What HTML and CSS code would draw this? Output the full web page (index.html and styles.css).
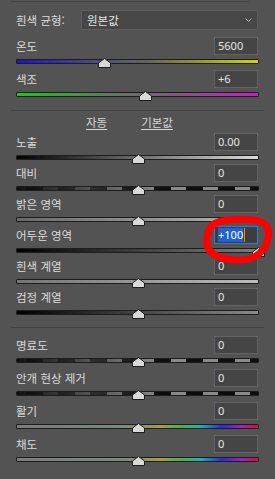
FILE: index.html
```html
<!DOCTYPE html>
<html lang="ko">
<head>
    <meta charset="UTF-8">
    <meta name="viewport" content="width=device-width, initial-scale=1.0">
    <title>기본 보정</title>
    <link rel="stylesheet" href="styles.css">
</head>
<body>
    <div class="panel">
        <div class="top-edge"></div>

        <div class="wb-row">
            <span class="label">흰색 균형:</span>
            <div class="select">
                <span>원본값</span>
                <svg class="chevron" width="7" height="4" viewBox="0 0 7 4"><path d="M0.5 0.5 L3.5 3.5 L6.5 0.5" fill="none" stroke="#bcbcbc" stroke-width="1"/></svg>
            </div>
        </div>

        <!-- white balance -->
        <div class="group">
            <div class="ctrl">
                <div class="ctrl-head"><span class="label">온도</span><span class="num">5600</span></div>
                <div class="track temp"><svg class="thumb" style="left: 36%" width="13" height="10" viewBox="0 0 13 10"><path d="M6.5 0.5 L12.5 5 L12.5 9.5 L0.5 9.5 L0.5 5 Z" fill="#d9d9d9" stroke="#1c1c1c"/></svg></div>
            </div>
            <div class="ctrl">
                <div class="ctrl-head"><span class="label">색조</span><span class="num">+6</span></div>
                <div class="track tint"><svg class="thumb" style="left: 53%" width="13" height="10" viewBox="0 0 13 10"><path d="M6.5 0.5 L12.5 5 L12.5 9.5 L0.5 9.5 L0.5 5 Z" fill="#d9d9d9" stroke="#1c1c1c"/></svg></div>
            </div>
        </div>

        <div class="sep"></div>

        <div class="auto-row">
            <span class="link">자동</span>
            <span class="link">기본값</span>
        </div>

        <!-- tone -->
        <div class="group tight">
            <div class="ctrl">
                <div class="ctrl-head"><span class="label">노출</span><span class="num">0.00</span></div>
                <div class="track expo"><svg class="thumb" style="left: 50%" width="13" height="10" viewBox="0 0 13 10"><path d="M6.5 0.5 L12.5 5 L12.5 9.5 L0.5 9.5 L0.5 5 Z" fill="#d9d9d9" stroke="#1c1c1c"/></svg></div>
            </div>
            <div class="ctrl">
                <div class="ctrl-head"><span class="label">대비</span><span class="num">0</span></div>
                <div class="track pattern"><svg class="thumb" style="left: 50%" width="13" height="10" viewBox="0 0 13 10"><path d="M6.5 0.5 L12.5 5 L12.5 9.5 L0.5 9.5 L0.5 5 Z" fill="#d9d9d9" stroke="#1c1c1c"/></svg></div>
            </div>
            <div class="ctrl">
                <div class="ctrl-head"><span class="label">밝은 영역</span><span class="num">0</span></div>
                <div class="track highs"><svg class="thumb" style="left: 50%" width="13" height="10" viewBox="0 0 13 10"><path d="M6.5 0.5 L12.5 5 L12.5 9.5 L0.5 9.5 L0.5 5 Z" fill="#d9d9d9" stroke="#1c1c1c"/></svg></div>
            </div>
            <div class="ctrl">
                <div class="ctrl-head"><span class="label">어두운 영역</span><span class="num focus"><span class="sel">+100</span><span class="caret"></span></span></div>
                <div class="track shadows"><svg class="thumb" style="left: 100%" width="13" height="10" viewBox="0 0 13 10"><path d="M6.5 0.5 L12.5 5 L12.5 9.5 L0.5 9.5 L0.5 5 Z" fill="#d9d9d9" stroke="#1c1c1c"/></svg></div>
            </div>
            <div class="ctrl">
                <div class="ctrl-head"><span class="label">흰색 계열</span><span class="num">0</span></div>
                <div class="track whites"><svg class="thumb" style="left: 50%" width="13" height="10" viewBox="0 0 13 10"><path d="M6.5 0.5 L12.5 5 L12.5 9.5 L0.5 9.5 L0.5 5 Z" fill="#d9d9d9" stroke="#1c1c1c"/></svg></div>
            </div>
            <div class="ctrl">
                <div class="ctrl-head"><span class="label">검정 계열</span><span class="num">0</span></div>
                <div class="track blacks"><svg class="thumb" style="left: 50%" width="13" height="10" viewBox="0 0 13 10"><path d="M6.5 0.5 L12.5 5 L12.5 9.5 L0.5 9.5 L0.5 5 Z" fill="#d9d9d9" stroke="#1c1c1c"/></svg></div>
            </div>
        </div>

        <div class="sep lower"></div>

        <!-- presence -->
        <div class="group presence">
            <div class="ctrl">
                <div class="ctrl-head"><span class="label">명료도</span><span class="num">0</span></div>
                <div class="track pattern"><svg class="thumb" style="left: 50%" width="13" height="10" viewBox="0 0 13 10"><path d="M6.5 0.5 L12.5 5 L12.5 9.5 L0.5 9.5 L0.5 5 Z" fill="#d9d9d9" stroke="#1c1c1c"/></svg></div>
            </div>
            <div class="ctrl">
                <div class="ctrl-head"><span class="label">안개 현상 제거</span><span class="num">0</span></div>
                <div class="track pattern"><svg class="thumb" style="left: 50%" width="13" height="10" viewBox="0 0 13 10"><path d="M6.5 0.5 L12.5 5 L12.5 9.5 L0.5 9.5 L0.5 5 Z" fill="#d9d9d9" stroke="#1c1c1c"/></svg></div>
            </div>
            <div class="ctrl">
                <div class="ctrl-head"><span class="label">활기</span><span class="num">0</span></div>
                <div class="track rainbow"><svg class="thumb" style="left: 50%" width="13" height="10" viewBox="0 0 13 10"><path d="M6.5 0.5 L12.5 5 L12.5 9.5 L0.5 9.5 L0.5 5 Z" fill="#d9d9d9" stroke="#1c1c1c"/></svg></div>
            </div>
            <div class="ctrl">
                <div class="ctrl-head"><span class="label">채도</span><span class="num">0</span></div>
                <div class="track rainbow"><svg class="thumb" style="left: 50%" width="13" height="10" viewBox="0 0 13 10"><path d="M6.5 0.5 L12.5 5 L12.5 9.5 L0.5 9.5 L0.5 5 Z" fill="#d9d9d9" stroke="#1c1c1c"/></svg></div>
            </div>
        </div>

        <!-- red marker drawn over the focused field -->
        <svg class="marker" width="72" height="54" viewBox="0 0 72 54">
            <path d="M7 15 C 9 5, 32 3, 52 5 C 64 6, 68 13, 66 23 C 64 36, 53 45, 38 45 C 22 45, 7 41, 5 30 C 4 22, 5 15, 12 9" fill="none" stroke="#ff0000" stroke-width="7" stroke-linecap="round"/>
        </svg>
    </div>
</body>
</html>
```

FILE: styles.css
```css
body {
    margin: 0;
    width: 275px;
    height: 479px;
    overflow: hidden;
    background: #535353;
    font-family: "Noto Sans CJK KR", "Noto Sans", sans-serif;
    font-size: 11.5px;
    color: #dcdcdc;
}

.panel {
    position: relative;
    padding: 0 16px;
}

.top-edge {
    height: 1px;
    margin: 0 10px 0 -5px;
    border-bottom: 1px solid #444444;
}

.wb-row {
    display: flex;
    align-items: center;
    height: 20px;
    margin-top: 8px;
}

.wb-row .label {
    width: 65px;
    flex-shrink: 0;
}

.select {
    flex: 1;
    height: 20px;
    margin-right: 1px;
    box-sizing: border-box;
    padding: 0 5px;
    border: 1px solid #5e5e5e;
    border-radius: 2px;
    background: #474747;
    display: flex;
    align-items: center;
    justify-content: space-between;
    color: #e4e4e4;
}

.group {
    margin-top: 7px;
}

.ctrl + .ctrl {
    margin-top: 6px;
}

.group.tight {
    margin-top: 0;
}

.group.tight .ctrl + .ctrl {
    margin-top: 4px;
}

.group.presence {
    margin-top: 8px;
}

.ctrl-head {
    display: flex;
    align-items: center;
    justify-content: space-between;
    height: 18px;
}

.num {
    width: 44px;
    height: 18px;
    margin-right: 1px;
    box-sizing: border-box;
    padding-left: 3px;
    border: 1px solid #636363;
    background: #454545;
    font-family: "Noto Sans", sans-serif;
    font-size: 11px;
    line-height: 16px;
    color: #e6e6e6;
    display: flex;
    align-items: center;
}

.num.focus {
    border-color: #2d7be0;
    background: #3d3d3d;
}

.sel {
    background: #2462c8;
    color: #ffffff;
    line-height: 14px;
}

.caret {
    width: 1px;
    height: 14px;
    margin-left: 1px;
    background: #ef8a2a;
}

.track {
    position: relative;
    height: 5px;
    margin-top: 4px;
    box-sizing: border-box;
    border: 1px solid #1d1d1d;
    border-radius: 1px;
}

.thumb {
    position: absolute;
    top: -2px;
    margin-left: -6px;
}

.temp {
    background: linear-gradient(90deg, #1818c4, #4c4c82 33%, #66665a 55%, #d4d400);
}

.tint {
    background: linear-gradient(90deg, #1ec41e, #5c7c5c 38%, #7c5c7c 62%, #c81ec8);
}

.expo {
    background: linear-gradient(90deg, #000000, #dadada);
}

.pattern {
    background:
        linear-gradient(90deg, rgba(10, 10, 10, 0.95), rgba(60, 60, 60, 0.7) 30%, rgba(70, 70, 70, 0) 60%),
        repeating-linear-gradient(90deg, #8a8a8a 0 9px, #0e0e0e 9px 26px, #8a8a8a 26px 32px);
}

.highs {
    background: linear-gradient(90deg, #6a6a6a, #b4b4b4);
}

.shadows {
    background: linear-gradient(90deg, #000000, #7e7e7e);
}

.whites {
    background: linear-gradient(90deg, #747474, #bcbcbc);
}

.blacks {
    background: linear-gradient(90deg, #000000, #8a8a8a);
}

.rainbow {
    background: linear-gradient(90deg, #7a7a7a, #7d8a80 45%, #a89c44 60%, #4caf4c 68%, #22b0b0 76%, #2232d0 85%, #a020c0 93%, #d0103c);
}

.sep {
    margin: 13px -5px 0;
    border-top: 1px solid #424242;
}

.sep.lower {
    margin-top: 12px;
}

.auto-row {
    display: flex;
    gap: 34px;
    height: 22px;
    padding-left: 70px;
    line-height: 22px;
}

.link {
    text-decoration: underline;
    text-underline-offset: 2px;
    color: #d6d6d6;
}

.marker {
    position: absolute;
    left: 202px;
    top: 215px;
}
```
